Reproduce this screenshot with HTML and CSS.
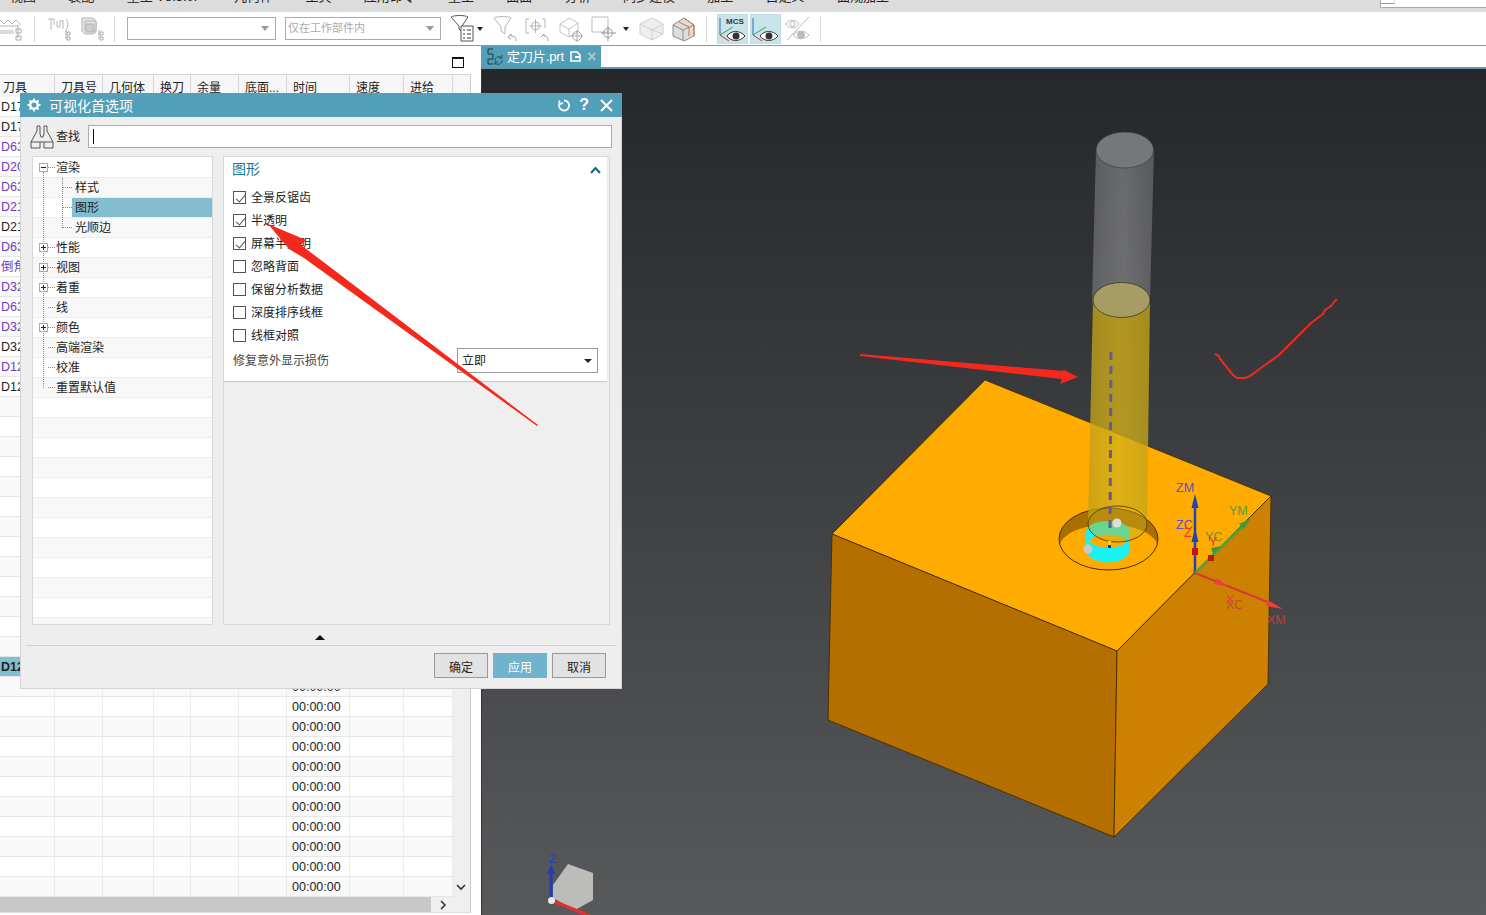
FILE: index.html
```html
<!DOCTYPE html>
<html lang="zh">
<head>
<meta charset="utf-8">
<title>可视化首选项</title>
<link rel="stylesheet" href="styles.css">
</head>
<body>
<div class="app">
  <header class="menu">
    <nav class="menu-items"><span>视图</span><span>装配</span><span>重工 V8.5.0F</span><span>几何体</span><span>工具</span><span>应用命令</span><span>重工</span><span>曲面</span><span>分析</span><span>同步建模</span><span>加工</span><span>自定义</span><span>曲规加工</span></nav>
    <div class="menu-search"><i></i></div>
  </header>

  <div class="toolbar">
    <svg class="tool" width="24" height="26" viewBox="0 0 24 26" fill="none" stroke="#b5b5b5"><path d="M0 4l4 4 4-4 4 4 4-4 4 4v1M0 10h18M0 15h14M0 17h14"/><path d="M16 13h5v4h-5zM16 20h5v4h-5zM18 9v13" stroke="#aaa"/></svg>
    <i class="sep m10"></i>
    <svg class="tool m12" width="24" height="26" viewBox="0 0 24 26" fill="none" stroke="#b5b5b5"><path d="M1 3h6M4 3v11M7 3v6M10 5v6h3V5M13 5h3M16 4v9M19 3c3 3 2 8 0 11"/><path d="M20 16h3v3h-3zM20 21h3v3h-3zM19 14v9" stroke="#aaa"/></svg>
    <svg class="tool m9" width="24" height="26" viewBox="0 0 24 26" fill="#e4e4e4" stroke="#b5b5b5"><path d="M2 2h11l3 3v11l-3 2H5l-3-3z"/><path d="M5 5h11v9H5z"/><path d="M6 8h8v8H6z" fill="#ccc"/><path d="M20 16h3v3h-3zM20 21h3v3h-3zM19 14v9" fill="none" stroke="#aaa"/></svg>
    <i class="sep m10"></i>
    <div class="combo combo-a m12"><b></b></div>
    <div class="combo combo-b m9"><span>仅在工作部件内</span><b></b></div>
    <svg class="tool m9" width="24" height="27" viewBox="0 0 24 27" fill="none" stroke="#555"><path d="M1 2c3-2 14-2 17 0l-6 9v6l-3-3v-3z"/><path d="M11 11h12v15H11z" fill="#fff"/><path d="M13 15h2M17 15h4M13 19h2M17 19h4M13 23h2M17 23h4" stroke="#333"/></svg>
    <i class="caret m3"></i>
    <svg class="tool m10" width="24" height="26" viewBox="0 0 24 26" fill="none" stroke="#b5b5b5"><path d="M1 2c3-2 14-2 17 0l-6 9v7l-4-3v-4z"/><path d="M15 21l3-3v2c3 0 5 1 5 5M15 21l3 2" stroke="#999"/></svg>
    <svg class="tool m8" width="24" height="26" viewBox="0 0 24 26" fill="none" stroke="#b5b5b5"><path d="M4 3H1v14h3M17 3h3v9"/><circle cx="10.500" cy="10" r="4"/><path d="M10.500 3v14M4 10h13"/><path d="M16 21l3-3v2c3 0 4 1 4 5" stroke="#999"/></svg>
    <svg class="tool m10" width="24" height="26" viewBox="0 0 24 26" fill="none" stroke="#c4c4c4"><path d="M1 8l9-6 9 5v9l-9 5-9-5zM1 8l9 5 9-6M10 13v8"/><circle cx="18" cy="20" r="4.500" stroke="#aaa"/><path d="M18 14v12M12 20h12" stroke="#aaa"/></svg>
    <svg class="tool m8" width="26" height="26" viewBox="0 0 26 26" fill="none" stroke="#bbb"><path d="M1 1h16v15H1z"/><circle cx="17" cy="17" r="4.500" stroke="#999"/><path d="M17 10v15M10 17h15" stroke="#999"/></svg>
    <i class="caret m6"></i>
    <svg class="tool m10" width="25" height="26" viewBox="0 0 25 26" fill="#eee" stroke="#d0d0d0"><path d="M1 8l12-6 11 6v10l-11 6L1 18z"/><path d="M1 8l12 6 11-6M13 14v10M13 14l11 4" fill="none"/></svg>
    <svg class="tool m7" width="25" height="26" viewBox="0 0 25 26" fill="none" stroke="#8b8b8b"><path d="M2 9l11-7 10 7v11l-10 5L2 20z" fill="#ddd"/><path d="M2 9l10 5 11-5M12 14v10"/><path d="M13 2l10 7v11M8 6l10 5v9" stroke="#d2792e"/></svg>
    <i class="sep m10"></i>
    <div class="toggle m10">
      <svg width="30" height="30" viewBox="0 0 30 30" fill="none"><path d="M3 4v17" stroke="#2b6fb7"/><path d="M3 21l13-8" stroke="#3aa54a"/><path d="M3 21l9 6" stroke="#c93333"/><text x="9" y="10" class="mcs">MCS</text><path d="M10 22c4-6 13-6 18 0-5 6-14 6-18 0z" stroke="#333" fill="#fff"/><circle cx="19" cy="22" r="3.500" fill="#333"/></svg>
    </div>
    <div class="toggle wide m2">
      <svg width="31" height="30" viewBox="0 0 31 30" fill="none"><path d="M3 4v17" stroke="#2b6fb7"/><path d="M3 21l13-8" stroke="#3aa54a"/><path d="M3 21l9 6" stroke="#c93333"/><path d="M10 22c4-6 13-6 18 0-5 6-14 6-18 0z" stroke="#333" fill="#fff"/><circle cx="19" cy="22" r="3.500" fill="#333"/></svg>
    </div>
    <svg class="tool m4" width="26" height="26" viewBox="0 0 26 26" fill="none" stroke="#bbb"><path d="M1 8c3-5 10-5 13 0-3 5-10 5-13 0z"/><circle cx="7.500" cy="8" r="2.500"/><path d="M2 24L24 1"/><path d="M8 19c4-5 12-5 16 0-4 5-12 5-16 0z"/><circle cx="16" cy="19" r="3.500" fill="#bbb"/></svg>
    <i class="sep m9"></i>
  </div>

  <main class="main">
    <section class="pane">
      <div class="pane-top"><i class="maximize"></i></div>
      <div class="table">
        <div class="thead">
          <span>刀具</span><span>刀具号</span><span>几何体</span><span>换刀</span><span>余量</span><span>底面...</span><span>时间</span><span>速度</span><span>进给</span>
        </div>
        <div class="tbody">
          <div class="row"><span>D17</span></div>
          <div class="row"><span>D17</span></div>
          <div class="row pu"><span>D63</span></div>
          <div class="row pu"><span>D20</span></div>
          <div class="row pu"><span>D63</span></div>
          <div class="row pu"><span>D21</span></div>
          <div class="row"><span>D21</span></div>
          <div class="row pu"><span>D63</span></div>
          <div class="row pu"><span>倒角</span></div>
          <div class="row pu"><span>D32</span></div>
          <div class="row pu"><span>D63</span></div>
          <div class="row pu"><span>D32</span></div>
          <div class="row"><span>D32</span></div>
          <div class="row pu"><span>D12</span></div>
          <div class="row"><span>D12</span></div>
          <div class="row"></div><div class="row"></div><div class="row"></div><div class="row"></div><div class="row"></div>
          <div class="row"></div><div class="row"></div><div class="row"></div><div class="row"></div><div class="row"></div>
          <div class="row"></div><div class="row"></div><div class="row"></div>
          <div class="row sel"><span>D12</span></div>
          <div class="row"><span></span><span></span><span></span><span></span><span></span><span></span><span>00:00:00</span><span></span><span></span></div>
          <div class="row"><span></span><span></span><span></span><span></span><span></span><span></span><span>00:00:00</span><span></span><span></span></div>
          <div class="row"><span></span><span></span><span></span><span></span><span></span><span></span><span>00:00:00</span><span></span><span></span></div>
          <div class="row"><span></span><span></span><span></span><span></span><span></span><span></span><span>00:00:00</span><span></span><span></span></div>
          <div class="row"><span></span><span></span><span></span><span></span><span></span><span></span><span>00:00:00</span><span></span><span></span></div>
          <div class="row"><span></span><span></span><span></span><span></span><span></span><span></span><span>00:00:00</span><span></span><span></span></div>
          <div class="row"><span></span><span></span><span></span><span></span><span></span><span></span><span>00:00:00</span><span></span><span></span></div>
          <div class="row"><span></span><span></span><span></span><span></span><span></span><span></span><span>00:00:00</span><span></span><span></span></div>
          <div class="row"><span></span><span></span><span></span><span></span><span></span><span></span><span>00:00:00</span><span></span><span></span></div>
          <div class="row"><span></span><span></span><span></span><span></span><span></span><span></span><span>00:00:00</span><span></span><span></span></div>
          <div class="row"><span></span><span></span><span></span><span></span><span></span><span></span><span>00:00:00</span><span></span><span></span></div>
          <svg class="vscroll" width="10" height="8" viewBox="0 0 10 8" fill="none" stroke="#333" stroke-width="1.600"><path d="M1 1l4 4 4-4"/></svg>
        </div>
        <div class="hscroll"><div class="thumb"></div><svg width="8" height="10" viewBox="0 0 8 10" fill="none" stroke="#333" stroke-width="1.600"><path d="M1 1l4 4-4 4"/></svg></div>
      </div>
    </section>

    <section class="view">
      <div class="tabs">
        <div class="tab">
          <svg width="18" height="18" viewBox="0 0 18 18" fill="none" stroke="#22323c"><path d="M2 1h5M2 1v5h5v5H2M2 11v5h5"/><path d="M9 13a4 4 0 0 1 7-3M16 12a4 4 0 0 1-7 3M16 7v3h-3M9 17v-3h3" stroke="#3a4a52"/></svg>
          <span class="tab-name">定刀片.prt</span>
          <svg class="tab-save" width="11" height="11" viewBox="0 0 11 11" fill="#fff" stroke="#fff"><path d="M1 1h6l3 3v6H1z" fill="none" stroke-width="1.600"/><path d="M5 5h5v2H5z" stroke="none"/></svg>
          <span class="tab-close">×</span>
        </div>
      </div>
      <svg class="canvas" width="1004" height="846" viewBox="482 69 1004 846">
        <defs>
          <linearGradient id="gBody" x1="0" x2="1" y1="0" y2="0"><stop offset="0" stop-color="#b0b0b0"/><stop offset=".5" stop-color="#d8d8d8"/><stop offset="1" stop-color="#a8a8a8"/></linearGradient>
          <linearGradient id="yBody" x1="0" x2="1" y1="0" y2="0"><stop offset="0" stop-color="#c0a018"/><stop offset=".5" stop-color="#d4b21a"/><stop offset="1" stop-color="#c4a418"/></linearGradient>
        </defs>
        <g stroke="#3c2800" stroke-width=".8">
          <polygon points="985,380 1271,496 1117,651 832,534" fill="#ffab00"/>
          <polygon points="832,534 1117,651 1114,837 828,720" fill="#b56e00"/>
          <polygon points="1117,651 1271,496 1268,684 1114,837" fill="#cd8100"/>
        </g>
        <ellipse cx="1108.500" cy="539" rx="49.500" ry="31" fill="#a86e00"/>
        <ellipse cx="1108.500" cy="547" rx="49" ry="22.500" fill="#ffab00"/>
        <ellipse cx="1108.500" cy="539" rx="49.500" ry="31" fill="none" stroke="#4a3000"/>
        <path d="M1086 532a22 11 0 0 1 44 0v17a22 13.500 0 0 1-44 0z" fill="#19f2f2"/>
        <ellipse cx="1108" cy="541" rx="18" ry="6.500" fill="#ffab00"/>
        <path d="M1096 151L1092 300A29 18 0 0 0 1150 300L1154 150z" fill="url(#gBody)" fill-opacity=".36"/>
        <ellipse cx="1124.800" cy="150" rx="28.800" ry="18" fill="#767778" stroke="#333"  stroke-width=".6"/>
        <path d="M1093 300L1088 524A29.500 18 0 0 1 1147 524L1150 300z" fill="url(#yBody)" fill-opacity=".78"/>
        <ellipse cx="1121.500" cy="300" rx="28.500" ry="17.500" fill="#a59d63" stroke="#2a2a1a" stroke-width=".7"/>
        <ellipse cx="1117.500" cy="524" rx="29.500" ry="18" fill="#c9b21e" fill-opacity=".45" stroke="#5f4800"/>
        <path d="M1111 352L1110 534" stroke="#6a5a8c" stroke-width="3" stroke-dasharray="8 6"/>
        <path d="M1108 541h3v4h-3z" fill="#ffd21c"/><path d="M1108 545h3v3h-3z" fill="#1830c0"/>
        <circle cx="1117" cy="523" r="4.500" fill="#ddd"/>
        <circle cx="1088" cy="549" r="4.500" fill="#c9c9c9"/>

        <path d="M1195 573V500" stroke="#1f45b0" stroke-width="2.500"/>
        <path d="M1195 494l3.500 14h-7zM1195 528l3.500 14h-7z" fill="#1f45b0"/>
        <rect x="1192" y="548" width="6" height="7" fill="#b81818"/>
        <path d="M1195 573L1248 521" stroke="#4ea43a" stroke-width="2.500"/>
        <path d="M1250 519l-6 10-5-5zM1222 546l-9 8-2-6z" fill="#3d9a35"/>
        <rect x="1208" y="555" width="6" height="6" fill="#b81818"/>
        <path d="M1195 573L1270 603" stroke="#d63a3a" stroke-width="2"/>
        <path d="M1283 609l-17-3 2-6zM1229 587l-15-3 3-6z" fill="#ef4040"/>
        <g class="axis">
          <text x="1176" y="492" fill="#5a52c8">ZM</text>
          <text x="1176" y="529" fill="#5a52c8">ZC</text>
          <text x="1184" y="537" fill="#e8401c">Z</text>
          <text x="1205" y="541" fill="#789030">YC</text>
          <text x="1209" y="546" fill="#e83030">Y</text>
          <text x="1229" y="515" fill="#5c9a38">YM</text>
          <text x="1226" y="604" fill="#e84040">X</text>
          <text x="1226" y="609" fill="#c8483c">XC</text>
          <text x="1267" y="624" fill="#b84040">XM</text>
        </g>

        <polygon points="568,864 593,873 593,900 575,910 553,898 553,885" fill="#bcbdbb"/>
        <path d="M555 896L580 875" stroke="#a8c8a8" stroke-width="1"/>
        <path d="M551 900V868" stroke="#1f3dc0" stroke-width="3"/>
        <path d="M551 864l4 10h-8z" fill="#1f3dc0"/>
        <text x="549" y="863" class="axis-z">Z</text>
        <path d="M553 901L590 916" stroke="#e03030" stroke-width="3.500"/>
        <circle cx="551.500" cy="900.500" r="3.500" fill="#e8e8e8"/>
      </svg>
    </section>
  </main>

  <aside class="dialog">
    <div class="dlg-title">
      <svg width="14" height="14" viewBox="0 0 14 14" fill="none" stroke="#fff"><circle cx="7" cy="7" r="3.800" stroke-width="2.400"/><path d="M7 .5v2.500M7 11v2.500M.5 7H3M11 7h2.500M2.500 2.500l1.500 1.500M10 10l1.500 1.500M11.500 2.500L10 4M4 10l-1.500 1.500" stroke-width="1.800"/></svg>
      <h1>可视化首选项</h1>
      <svg class="ico-reset" width="13" height="13" viewBox="0 0 13 13" fill="none" stroke="#fff" stroke-width="1.800"><path d="M6 1.500a5 5 0 1 1-4.500 3M1 1.500l1 3.500 3-1"/></svg>
      <span class="ico-help">?</span>
      <svg class="ico-x" width="13" height="13" viewBox="0 0 13 13" stroke="#fff" stroke-width="2"><path d="M1 1l11 11M12 1L1 12"/></svg>
    </div>
    <div class="dlg-search">
      <svg width="24" height="24" viewBox="0 0 24 24" fill="none" stroke="#555"><path d="M7 1h3v8l1 3h2l1-3V1h3v5l6 11v6h-9v-6H10v6H1v-6l6-11zM1 17h9M14 17h9"/></svg>
      <label>查找</label>
      <div class="field"><i></i></div>
    </div>
    <div class="dlg-body">
      <div class="tree">
        <i class="vline a"></i><i class="vline b"></i>
        <div class="node"><i class="exp minus"></i><i class="dash"></i><span>渲染</span></div>
        <div class="node sub"><i class="dash"></i><span>样式</span></div>
        <div class="node sub on"><i class="dash"></i><span>图形</span></div>
        <div class="node sub"><i class="dash"></i><span>光顺边</span></div>
        <div class="node"><i class="exp plus"></i><i class="dash"></i><span>性能</span></div>
        <div class="node"><i class="exp plus"></i><i class="dash"></i><span>视图</span></div>
        <div class="node"><i class="exp plus"></i><i class="dash"></i><span>着重</span></div>
        <div class="node leaf"><i class="dash"></i><span>线</span></div>
        <div class="node"><i class="exp plus"></i><i class="dash"></i><span>颜色</span></div>
        <div class="node leaf"><i class="dash"></i><span>高端渲染</span></div>
        <div class="node leaf"><i class="dash"></i><span>校准</span></div>
        <div class="node leaf"><i class="dash"></i><span>重置默认值</span></div>
        <div class="node"></div><div class="node"></div><div class="node"></div><div class="node"></div><div class="node"></div><div class="node"></div>
        <div class="node"></div><div class="node"></div><div class="node"></div><div class="node"></div><div class="node"></div><div class="node"></div>
      </div>
      <div class="props">
        <div class="group">
          <div class="group-head"><span>图形</span><svg width="11" height="8" viewBox="0 0 11 8" fill="none" stroke="#14677f" stroke-width="2"><path d="M1 7l4.500-5L10 7"/></svg></div>
          <div class="check"><i class="box on"></i><span>全景反锯齿</span></div>
          <div class="check"><i class="box on"></i><span>半透明</span></div>
          <div class="check"><i class="box on"></i><span>屏幕半透明</span></div>
          <div class="check"><i class="box"></i><span>忽略背面</span></div>
          <div class="check"><i class="box"></i><span>保留分析数据</span></div>
          <div class="check"><i class="box"></i><span>深度排序线框</span></div>
          <div class="check"><i class="box"></i><span>线框对照</span></div>
          <div class="repair"><span>修复意外显示损伤</span><div class="select"><span>立即</span><b></b></div></div>
        </div>
      </div>
    </div>
    <div class="dlg-collapse"><i></i></div>
    <div class="dlg-foot">
      <button class="btn">确定</button>
      <button class="btn primary">应用</button>
      <button class="btn">取消</button>
    </div>
  </aside>

  <svg class="markup" width="1486" height="915" viewBox="0 0 1486 915">
    <polygon points="268,224 306,240 301,245 538,425 537,426 304,258 289,249" fill="#f5281e"/>
    <polygon points="860,354 1064,371 1062,369 1078,377 1060,384 1062,379 860,356" fill="#f5281e"/>
    <path d="M1215 354L1219 356L1220 359L1233 375L1237 378L1245 378L1250 376L1265 365L1279 355L1291 343L1303 331L1311 323L1323 314L1325 310L1331 306L1335 301L1337 299" fill="none" stroke="#ee2a1e" stroke-width="2"/>
  </svg>
</div>
</body>
</html>
```
FILE: styles.css
```css
* { box-sizing: border-box; }
html, body { margin: 0; height: 100%; overflow: hidden; background: #fff; }
body { font: 12px/1.2 "Liberation Sans", "Noto Sans CJK SC", sans-serif; color: #222; }
i, b { display: block; font-style: normal; }

.app { position: relative; width: 1486px; height: 915px; display: flex; flex-direction: column; overflow: hidden; }

/* menu */
.menu { height: 12px; flex: none; background: #dcdcdc; display: flex; justify-content: space-between; overflow: hidden; }
.menu-items { display: flex; gap: 32.3px; padding-left: 10px; margin-top: -12px; font-size: 13px; line-height: 18px; height: 18px; }
.menu-search { width: 106px; height: 8px; background: #fff; border: 1px solid #aaa; border-top: 0; border-right: 0; }
.menu-search i { width: 14px; height: 4px; border-bottom: 1px solid #999; border-right: 1px solid #ddd; }

/* toolbar */
.toolbar { height: 34px; flex: none; display: flex; align-items: center; border-bottom: 1px solid #959595; background: #fff; }
.tool { flex: none; display: block; }
.sep { width: 1px; height: 26px; background: #d8d8d8; flex: none; }
.m2 { margin-left: 2px; } .m3 { margin-left: 3px; } .m4 { margin-left: 4px; } .m6 { margin-left: 6px; }
.m7 { margin-left: 7px; } .m8 { margin-left: 8px; } .m9 { margin-left: 9px; } .m10 { margin-left: 10px; } .m12 { margin-left: 12px; }
.combo { height: 23px; flex: none; border: 1px solid #aaa; background: #fff; display: flex; align-items: center; justify-content: space-between; padding: 0 6px 0 2px; color: #aaa; font-size: 11px; }
.combo-a { width: 149px; } .combo-b { width: 156px; }
.combo b { width: 0; height: 0; margin-left: auto; border: 4px solid transparent; border-top: 5px solid #999; border-bottom: 0; }
.caret { width: 0; height: 0; flex: none; border: 3.5px solid transparent; border-top: 4px solid #222; border-bottom: 0; margin-right: 0; }
.toggle { width: 31px; height: 30px; flex: none; background: #c9e3ea; border: 1px solid #bfdbe3; }
.toggle svg { display: block; margin: -1px; }
.mcs { font: bold 8px "Liberation Sans", sans-serif; fill: #333; }

/* layout */
.main { flex: 1; display: flex; min-height: 0; }
.pane { width: 481px; flex: none; background: #fff; }
.pane-top { height: 28px; padding: 11px 17px 0 0; display: flex; justify-content: flex-end; }
.maximize { width: 12px; height: 11px; border: 1px solid #111; border-top-width: 2px; }

/* table */
.table { width: 471px; border-right: 1px solid #ccc; border-bottom: 1px solid #ddd; background: #efefef; }
.thead, .row { display: grid; grid-template-columns: 55px 48px 51px 37px 48px 48px 63px 54px 49px; }
.thead { height: 23px; width: 470px; background: #f6f6f6; border-top: 1px solid #d8d8d8; grid-template-columns: 55px 48px 51px 37px 48px 48px 63px 54px 49px 17px; }
.thead span { border-right: 1px solid #d8d8d8; padding: 5px 0 0 6px; line-height: 16px; }
.thead span:first-child { padding-left: 3px; }
.tbody { position: relative; width: 453px; }
.row { height: 20px; background: #fff; border-bottom: 1px solid #e6e6e6; line-height: 20px; font-size: 12.500px; }
.row:nth-child(even) { background: #f9f9f9; }
.row span { border-right: 1px solid #ececec; padding-left: 1px; overflow: hidden; white-space: nowrap; }
.row span:nth-child(7) { padding-left: 5px; }
.pu { color: #6a3fb8; }
.row.sel, .row.sel:nth-child(even) { background: #82bdd0; font-weight: bold; }
.vscroll { position: absolute; left: 456px; bottom: 5px; }
.hscroll { height: 15px; display: flex; align-items: center; }
.thumb { width: 431px; height: 15px; background: #c8c8c8; margin-right: 9px; }

/* view */
.view { flex: 1; min-width: 0; display: flex; flex-direction: column; border-left: 1px solid #333; }
.tabs { height: 23px; flex: none; background: #fff; border-bottom: 2px solid #5c98a6; margin-left: -1px; }
.tab { width: 120px; height: 21px; background: #529fb9; display: flex; align-items: center; padding-left: 5px; color: #fff; font-size: 13px; }
.tab-name { margin-left: 3px; letter-spacing: -.1px; }
.tab-save { margin-left: 6px; }
.tab-close { margin-left: 6px; color: #b9c4c8; font-weight: bold; font-size: 16px; line-height: 16px; }
.canvas { display: block; background: linear-gradient(#25272a, #58595b); }
.axis text { font: 12.500px "Liberation Sans", sans-serif; }
.axis-z { font: 12px "Liberation Sans", sans-serif; fill: #2a3cc0; }

/* dialog */
.dialog { position: absolute; left: 20px; top: 93px; width: 602px; height: 596px; background: #eee; border: 1px solid #d4d4d4; border-top: 0; display: flex; flex-direction: column; }
.dlg-title { height: 24px; flex: none; margin: 0 -1px; background: #529fb9; color: #fff; display: flex; align-items: center; padding-left: 7px; }
.dlg-title h1 { margin: 2px 0 0 8px; font-size: 14px; font-weight: normal; flex: 1; }
.ico-help { font: bold 16px/16px "Liberation Sans", sans-serif; margin-left: 8px; }
.ico-x { margin: 0 9px 0 11px; }
.dlg-search { height: 23px; margin-top: 8px; flex: none; display: flex; align-items: center; padding: 0 9px; }
.dlg-search svg { flex: none; }
.dlg-search label { margin: 2px 0 0 2px; width: 32px; }
.field { flex: 1; height: 23px; background: #fff; border: 1px solid #aaa; padding: 3px 4px; }
.field i { width: 1px; height: 15px; background: #111; }
.dlg-body { height: 469px; flex: none; margin-top: 8px; padding: 0 11px; display: flex; gap: 10px; }
.tree { position: relative; width: 181px; flex: none; background: #fff; border: 1px solid #d8d8d8; padding-top: 1px; overflow: hidden; }
.node { height: 20px; display: flex; align-items: center; border-bottom: 1px solid #ececec; padding-left: 6px; background: #fff; }
.node span { line-height: 21px; height: 19px; }
.node:nth-of-type(even) { background: #f8f8f8; }
.vline { position: absolute; width: 0; border-left: 1px dotted #888; z-index: 1; }
.vline.a { left: 10px; top: 15px; height: 216px; }
.vline.b { left: 29px; top: 21px; height: 50px; }
.exp { width: 9px; height: 9px; flex: none; border: 1px solid #aaa; background: #fff; position: relative; z-index: 2; }
.exp::before { content: ""; position: absolute; left: 1px; right: 1px; top: 3px; height: 1px; background: #222; }
.plus::after { content: ""; position: absolute; top: 1px; bottom: 1px; left: 3px; width: 1px; background: #222; }
.dash { width: 7px; flex: none; border-top: 1px dotted #888; }
.node .dash + span { margin-left: 1px; }
.leaf { padding-left: 15px; }
.sub { padding-left: 30px; }
.sub .dash { width: 9px; }
.node.sub span { flex: 1; padding-left: 3px; margin-left: 0; }
.on span { background: #82bdd0; }
.props { width: 387px; flex: none; background: #efefef; border: 1px solid #d8d8d8; padding-right: 2px; }
.group { height: 224px; background: #fff; box-shadow: 0 1px 1px #ccc; padding: 0 9px; }
.group-head { height: 29px; margin: 0 -3px 0 -1px; display: flex; align-items: center; justify-content: space-between; color: #1a7590; font-size: 14px; padding-bottom: 4px; }
.check { height: 23px; display: flex; align-items: center; }
.check span { padding-top: 1px; line-height: 16px; }
.box { width: 13px; height: 13px; flex: none; border: 1px solid #555; background: #fff; position: relative; margin-right: 5px; }
.box.on::after { content: ""; position: absolute; left: 3.500px; top: 0.500px; width: 4px; height: 8px; border: solid #555; border-width: 0 1.500px 1.500px 0; transform: rotate(40deg); }
.repair { height: 25px; margin-top: 1px; display: flex; align-items: center; justify-content: space-between; color: #444; }
.repair span { padding-top: 2px; }
.select { width: 141px; height: 25px; background: #fff; border: 1px solid #999; display: flex; align-items: center; justify-content: space-between; padding: 0 5px 0 4px; color: #222; }
.select b { width: 0; height: 0; border: 4px solid transparent; border-top: 4px solid #222; border-bottom: 0; }
.dlg-collapse { height: 21px; flex: none; margin: 0 5px; display: flex; justify-content: center; align-items: flex-end; padding: 0 2px 5px 0; border-bottom: 1px solid #d2d2d2; }
.dlg-collapse i { width: 0; height: 0; border: 5px solid transparent; border-bottom: 5px solid #111; border-top: 0; }
.dlg-foot { flex: 1; display: flex; justify-content: flex-end; gap: 5px; padding: 7px 15px 0 0; }
.btn { width: 54px; height: 25px; padding: 1px 0 0; border: 1px solid #9a9a9a; background: #e2e2e2; color: #222; font: 12px "Liberation Sans", "Noto Sans CJK SC", sans-serif; }
.btn.primary { background: #6fb3cc; border-color: #6fb3cc; color: #fff; }

/* hand-drawn red review marks lying over everything */
.markup { position: absolute; left: 0; top: 0; pointer-events: none; }
```
